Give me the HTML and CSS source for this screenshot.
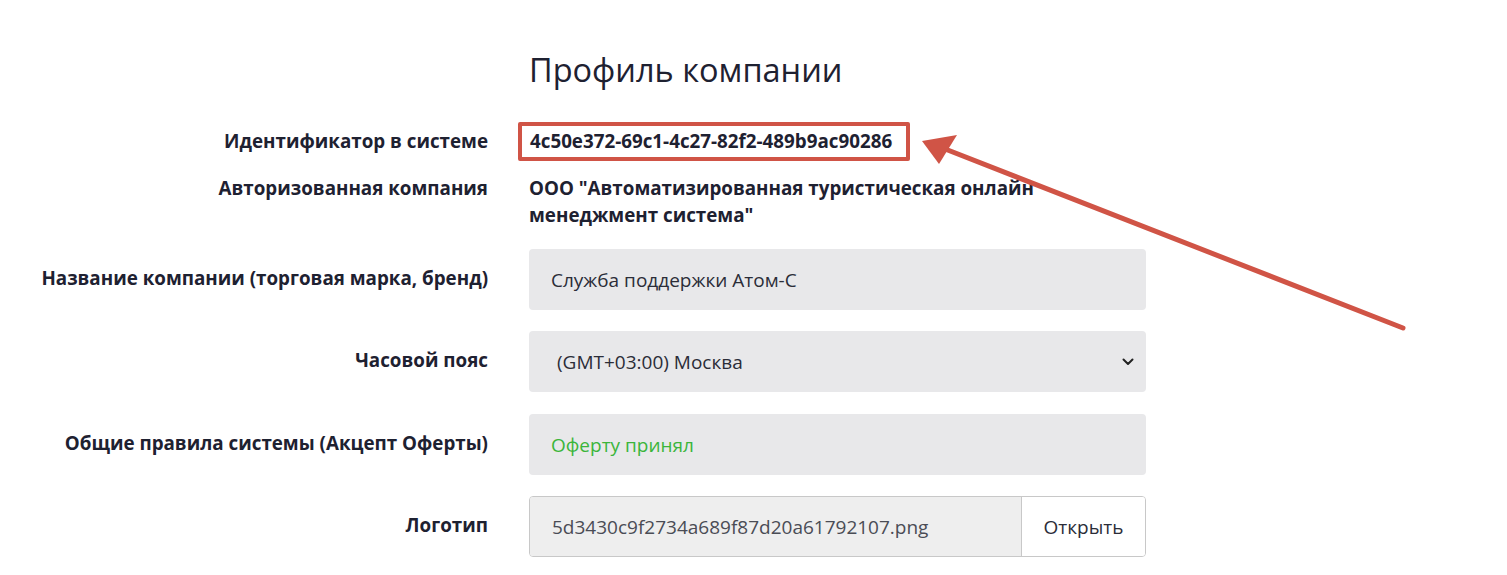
FILE: index.html
```html
<!DOCTYPE html>
<html>
<head>
  <title>Профиль компании</title>
  <link rel="stylesheet" href="styles.css">
</head>
<body>
  <div class="page">
    <div class="profile">
      <div></div>
      <h1 class="title">Профиль компании</h1>

      <div class="label id-label">Идентификатор в системе</div>
      <div class="value"><span class="id-box">4c50e372-69c1-4c27-82f2-489b9ac90286</span></div>

      <div class="label auth-label">Авторизованная компания</div>
      <div class="value auth-value">ООО "Автоматизированная туристическая онлайн менеджмент система"</div>

      <label class="label field-label" for="brand">Название компании (торговая марка, бренд)</label>
      <input class="field" id="brand" type="text" value="Служба поддержки Атом-С">

      <label class="label field-label" for="tz">Часовой пояс</label>
      <div class="select-wrap">
        <select class="field select" id="tz">
          <option>(GMT+03:00) Москва</option>
        </select>
        <svg class="chevron" width="12" height="8" viewBox="0 0 12 8">
          <path d="M1.5 1.5 L6 6 L10.5 1.5" fill="none" stroke="#222" stroke-width="2" stroke-linecap="round" stroke-linejoin="round"/>
        </svg>
      </div>

      <div class="label field-label">Общие правила системы (Акцепт Оферты)</div>
      <div class="field offer">Оферту принял</div>

      <div class="label field-label">Логотип</div>
      <div class="file-group">
        <input class="file-name" type="text" value="5d3430c9f2734a689f87d20a61792107.png" readonly>
        <button class="file-btn">Открыть</button>
      </div>
    </div>

    <svg class="arrow" width="1507" height="575" viewBox="0 0 1507 575">
      <line x1="1403" y1="328" x2="940" y2="147" stroke="#d05446" stroke-width="5" stroke-linecap="round"/>
      <polygon points="922,141 957,135 939,164" fill="#d05446"/>
    </svg>
  </div>
</body>
</html>
```

FILE: styles.css
```css
body {
  margin: 0;
  background-color: #fff;
  font-family: "Open Sans", "Liberation Sans", sans-serif;
  color: #1e2131;
}

.page {
  position: relative;
  height: 575px;
  overflow: hidden;
}

.profile {
  display: grid;
  grid-template-columns: 488px 617px;
  column-gap: 41px;
  padding-top: 51px;
  align-items: center;
}

.title {
  margin: 0 0 33px 0;
  font-size: 32.5px;
  font-weight: 400;
  line-height: 38px;
  color: #1e2131;
}

.label {
  text-align: right;
  font-weight: 700;
  font-size: 18.8px;
  line-height: 27px;
}

.value {
  font-weight: 700;
  font-size: 18.8px;
  line-height: 27px;
}

.id-box {
  display: inline-block;
  margin-left: -11px;
  padding: 2px 14px 2px 8px;
  border: 4px solid #d05446;
  border-radius: 2px;
}

.auth-label,
.auth-value {
  align-self: start;
  margin-top: 14px;
}

.auth-value {
  margin-bottom: 20px;
  padding-right: 100px;
}

.field-label {
  margin-top: -3px;
  margin-bottom: 21px;
}

.field {
  box-sizing: border-box;
  height: 61px;
  margin-bottom: 21px;
  padding: 0 22px;
  border: none;
  border-radius: 4px;
  background-color: #e8e8ea;
  font-family: inherit;
  font-size: 19px;
  color: #2b2d38;
  width: 100%;
}

.select-wrap {
  position: relative;
  margin-bottom: 22px;
}

.select {
  appearance: none;
  -webkit-appearance: none;
  padding-left: 28px;
  display: block;
  margin-bottom: 0;
}

.chevron {
  position: absolute;
  right: 12px;
  top: 27px;
}

.offer {
  display: flex;
  align-items: center;
  color: #3bb53b;
}

.file-group {
  display: flex;
  height: 61px;
  box-sizing: border-box;
  border: 1px solid #c8c8c8;
  border-radius: 4px;
  overflow: hidden;
  margin-bottom: 21px;
}

.file-name {
  flex: 1;
  min-width: 0;
  border: none;
  background-color: #eeeeee;
  padding: 0 22px;
  font-family: inherit;
  font-size: 19px;
  color: #4a4c55;
}

.file-btn {
  width: 124px;
  border: none;
  border-left: 1px solid #c8c8c8;
  background-color: #fff;
  font-family: inherit;
  font-size: 19px;
  color: #2b2d38;
}

.arrow {
  position: absolute;
  left: 0;
  top: 0;
  pointer-events: none;
}
```
